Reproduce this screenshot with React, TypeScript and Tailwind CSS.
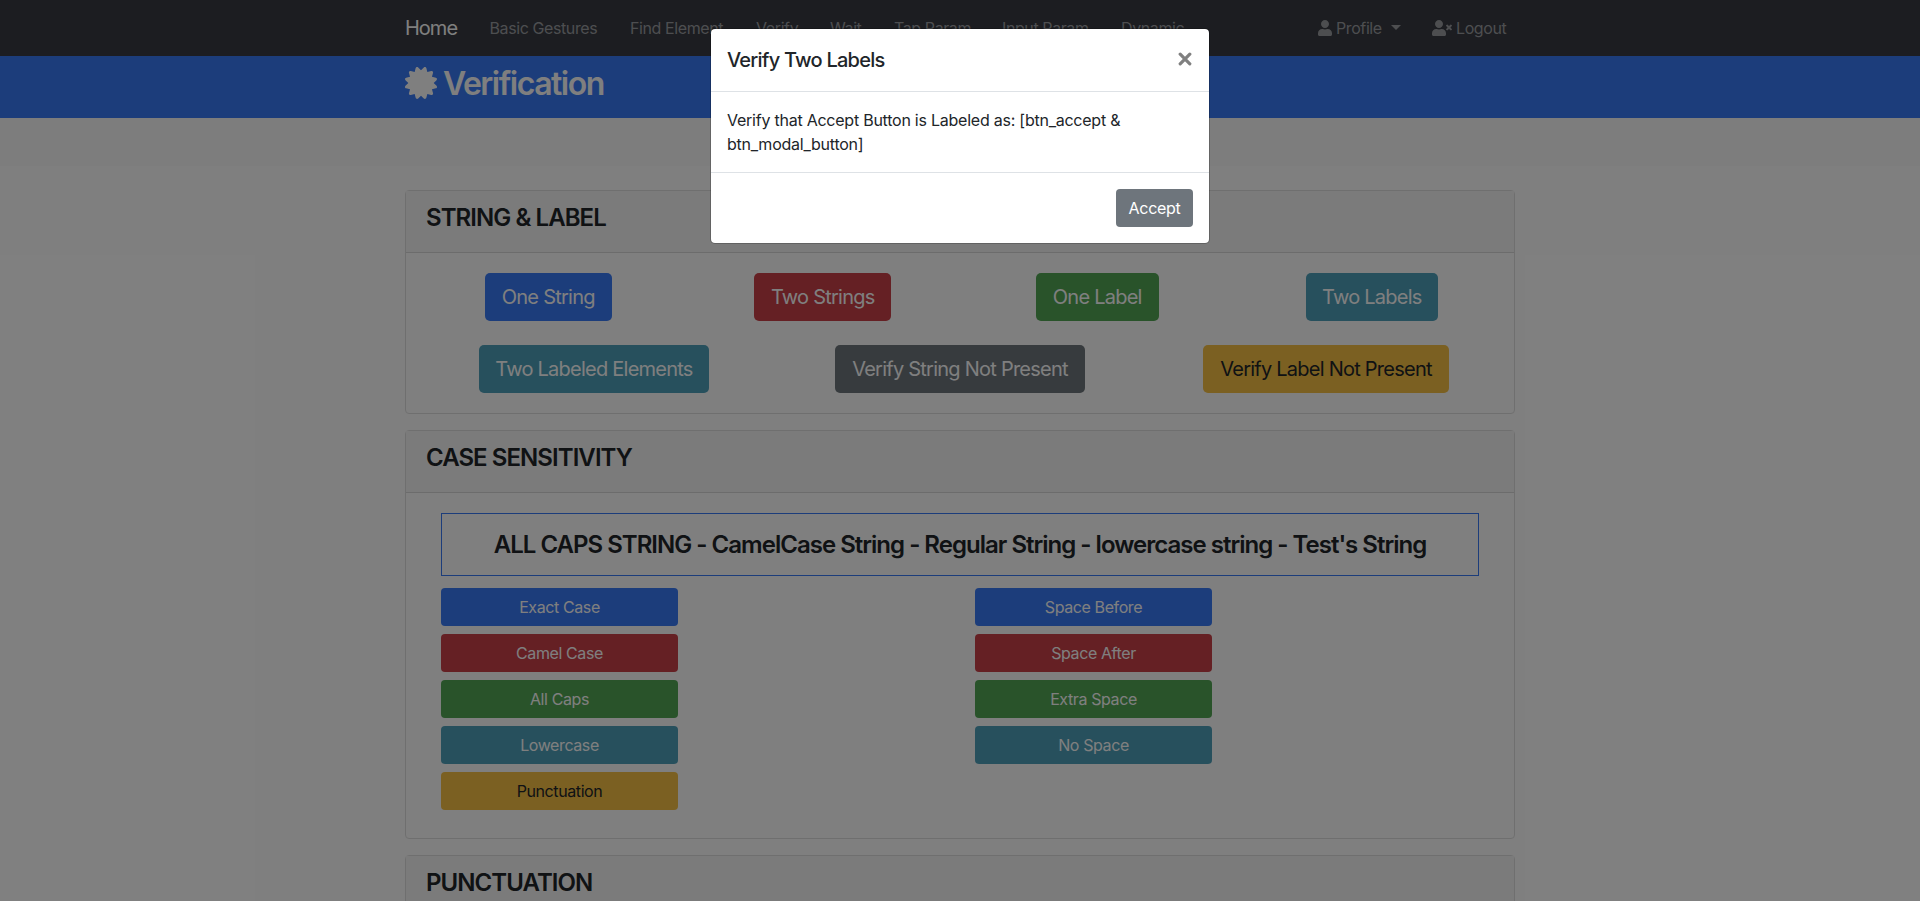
import React from "react";
import { FaCertificate, FaUser, FaUserTimes } from "react-icons/fa";

const tones = {
  primary: "bg-[#387af6] text-white",
  danger: "bg-[#ca4048] text-white",
  success: "bg-[#52a654] text-white",
  info: "bg-[#4ea0ba] text-white",
  secondary: "bg-[#6e767c] text-white",
  warning: "bg-[#f6c044] text-[#212529]",
};
type Tone = keyof typeof tones;

function Card({ title, children }: { title: string; children?: React.ReactNode }) {
  return (
    <section className="mb-4 rounded border border-[#dfdfdf] bg-white">
      <header className="h-[61.8px] border-b border-[#d8d8d8] bg-[#f7f7f7] px-5 pt-[13px]">
        <h4 className="text-2xl leading-[28.8px] font-semibold tracking-[-0.039em]">{title}</h4>
      </header>
      {children}
    </section>
  );
}

function LargeButton({ tone, width, label }: { tone: Tone; width: string; label: string }) {
  return (
    <div className="flex justify-center">
      <button className={`h-12 rounded-[5px] text-xl tracking-[-0.038em] whitespace-nowrap ${width} ${tones[tone]}`}>{label}</button>
    </div>
  );
}

function StackButton({ tone, label }: { tone: Tone; label: string }) {
  return <button className={`h-[38px] w-[237px] rounded text-base tracking-[-0.025em] ${tones[tone]}`}>{label}</button>;
}

const links: [string, string][] = [
  ["Basic Gestures", "w-[140.5px]"],
  ["Find Element", "w-[126px]"],
  ["Verify", "w-[74px]"],
  ["Wait", "w-[64px]"],
  ["Tap Param", "w-[108px]"],
  ["Input Param", "w-[119px]"],
  ["Dynamic", "w-[80px]"],
];

export default function App() {
  return (
    <div className="relative h-[901px] overflow-hidden bg-white font-['Inter',sans-serif] text-[#212529]">
      <nav className="h-14 bg-[#383b42]">
        <div className="mx-auto flex h-full w-[1110px] items-center text-base tracking-[-0.025em] whitespace-nowrap text-[#9b9da1]">
          <a className="w-[84.5px] text-xl tracking-[-0.05em] text-white">Home</a>
          {links.map(([label, width]) => (
            <a key={label} className={width}>{label}</a>
          ))}
          <div className="ml-auto flex items-center">
            <a className="flex w-[114px] items-center">
              <FaUser className="mr-1 h-4 w-[14px]" />
              Profile
              <span className="mb-0.5 ml-[9px] border-x-[5px] border-t-[5px] border-x-transparent border-t-[#9b9da1]" />
            </a>
            <a className="flex w-[83px] items-center">
              <FaUserTimes className="mr-1 h-4 w-5" />
              Logout
            </a>
          </div>
        </div>
      </nav>
      <div className="h-[62px] bg-[#387af6]">
        <div className="mx-auto flex w-[1110px] items-center pt-2 text-white">
          <FaCertificate className="mr-[6px] mb-px size-8" />
          <h2 className="pt-px text-[32px] leading-[38.4px] font-semibold tracking-[-0.047em]">Verification</h2>
        </div>
      </div>
      <div className="h-12 bg-[#fafafa]" />
      <main className="mx-auto w-[1110px] pt-6">
        <Card title="STRING & LABEL">
          <div className="space-y-6 px-[5px] py-5">
            <div className="grid grid-cols-4">
              <LargeButton tone="primary" width="w-[127px]" label="One String" />
              <LargeButton tone="danger" width="w-[137px]" label="Two Strings" />
              <LargeButton tone="success" width="w-[123px]" label="One Label" />
              <LargeButton tone="info" width="w-[132px]" label="Two Labels" />
            </div>
            <div className="grid grid-cols-3">
              <LargeButton tone="info" width="w-[230px]" label="Two Labeled Elements" />
              <LargeButton tone="secondary" width="w-[250px]" label="Verify String Not Present" />
              <LargeButton tone="warning" width="w-[246px]" label="Verify Label Not Present" />
            </div>
          </div>
        </Card>
        <Card title="CASE SENSITIVITY">
          <div className="h-[345px] px-[35px] pt-5">
            <h4 className="mb-3 flex h-[63.4px] items-center justify-center border border-[#387af6] pt-px text-2xl font-semibold tracking-[-0.041em] whitespace-nowrap">
              ALL CAPS STRING - CamelCase String - Regular String - lowercase string - Test's String
            </h4>
            <div className="flex gap-[297px]">
              <div className="flex flex-col gap-2">
                <StackButton tone="primary" label="Exact Case" />
                <StackButton tone="danger" label="Camel Case" />
                <StackButton tone="success" label="All Caps" />
                <StackButton tone="info" label="Lowercase" />
                <StackButton tone="warning" label="Punctuation" />
              </div>
              <div className="flex flex-col gap-2">
                <StackButton tone="primary" label="Space Before" />
                <StackButton tone="danger" label="Space After" />
                <StackButton tone="success" label="Extra Space" />
                <StackButton tone="info" label="No Space" />
              </div>
            </div>
          </div>
        </Card>
        <Card title="PUNCTUATION" />
      </main>

      <div className="absolute inset-0 flex items-start justify-center bg-black/50 pt-7">
        <div role="dialog" className="w-[500px] rounded-[5px] border border-black/20 bg-white bg-clip-padding">
          <div className="flex h-[63px] justify-between border-b border-[#dee2e6] py-4 pr-[17px] pl-4">
            <h5 className="text-xl leading-[30px] font-medium tracking-[-0.038em]">Verify Two Labels</h5>
            <button aria-label="Close" className="flex h-7 items-center text-[#808080]">
              <svg viewBox="0 0 14 14" className="size-[14px]" stroke="currentColor" strokeWidth="3.2" strokeLinecap="round">
                <path d="M2.2 2.2 11.8 11.8M11.8 2.2 2.2 11.8" />
              </svg>
            </button>
          </div>
          <p className="p-4 text-base leading-6 tracking-[-0.015em]">
            Verify that Accept Button is Labeled as: [btn_accept &<br />btn_modal_button]
          </p>
          <div className="flex justify-end border-t border-[#dee2e6] p-4">
            <button className="h-[38px] w-[77px] rounded bg-[#6e757c] text-base tracking-[-0.02em] text-white">Accept</button>
          </div>
        </div>
      </div>
    </div>
  );
}
